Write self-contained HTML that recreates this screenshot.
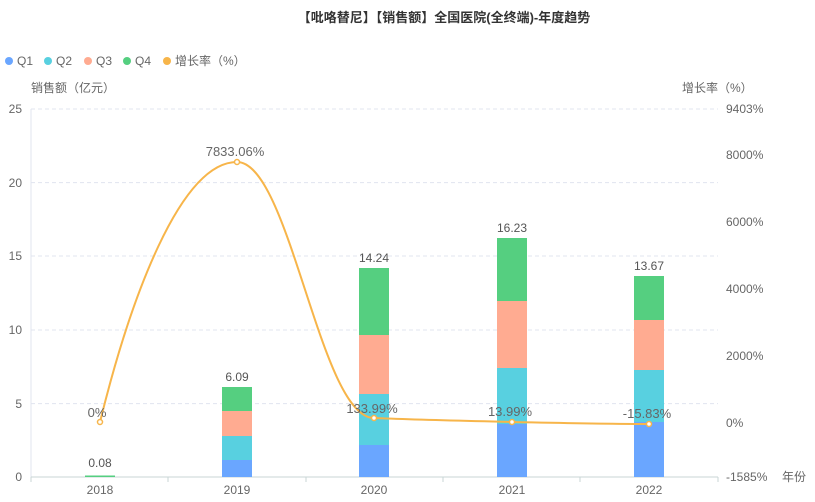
<!DOCTYPE html>
<html><head><meta charset="utf-8"><style>
body{margin:0;background:#fff;width:815px;height:497px;overflow:hidden}
svg text{font-family:"Liberation Sans","Noto Sans CJK SC",sans-serif}
</style></head><body>
<svg width="815" height="497" xmlns="http://www.w3.org/2000/svg">
<text x="444" y="22" font-size="13" font-weight="bold" fill="#333" text-anchor="middle">【吡咯替尼】【销售额】全国医院(全终端)-年度趋势</text>
<g font-size="12" fill="#666">
<circle cx="9" cy="61" r="4" fill="#6aa6ff"/><text x="17" y="65">Q1</text>
<circle cx="48" cy="61" r="4" fill="#58d0e0"/><text x="56" y="65">Q2</text>
<circle cx="88" cy="61" r="4" fill="#ffab91"/><text x="96" y="65">Q3</text>
<circle cx="127" cy="61" r="4" fill="#55cf80"/><text x="135" y="65">Q4</text>
<circle cx="167" cy="61" r="4" fill="#f7b54a"/><text x="175" y="65">增长率（%）</text>
<text x="31" y="92">销售额（亿元）</text>
<text x="682" y="92">增长率（%）</text>
</g>
<g stroke="#e0e4ef" stroke-dasharray="4,3">
<line x1="31" x2="718" y1="109" y2="109"/><line x1="31" x2="718" y1="182.6" y2="182.6"/>
<line x1="31" x2="718" y1="256" y2="256"/><line x1="31" x2="718" y1="330" y2="330"/>
<line x1="31" x2="718" y1="403.6" y2="403.6"/>
</g>
<line x1="31" x2="31" y1="109" y2="477" stroke="#e0e4ef"/>
<line x1="31" x2="718" y1="477" y2="477" stroke="#c9d5d5"/>
<g stroke="#c9d5d5"><line x1="31" x2="31" y1="477" y2="482"/><line x1="168" x2="168" y1="477" y2="482"/><line x1="306" x2="306" y1="477" y2="482"/><line x1="443" x2="443" y1="477" y2="482"/><line x1="580" x2="580" y1="477" y2="482"/><line x1="718" x2="718" y1="477" y2="482"/></g>
<g font-size="12" fill="#666" text-anchor="end">
<text x="22" y="113">25</text><text x="22" y="187">20</text><text x="22" y="260">15</text><text x="22" y="334">10</text><text x="22" y="408">5</text><text x="22" y="481">0</text>
</g>
<g font-size="12" fill="#666">
<text x="726" y="113">9403%</text><text x="726" y="159">8000%</text><text x="726" y="226">6000%</text><text x="726" y="293">4000%</text><text x="726" y="360">2000%</text><text x="726" y="427">0%</text><text x="726" y="481">-1585%</text><text x="782" y="481">年份</text>
</g>
<g font-size="12" fill="#666" text-anchor="middle">
<text x="100" y="494">2018</text><text x="237" y="494">2019</text><text x="374" y="494">2020</text><text x="512" y="494">2021</text><text x="649" y="494">2022</text>
</g>
<rect x="85" y="475.5" width="30" height="1.5" fill="#55cf80"/>
<rect x="222" y="460" width="30" height="17" fill="#6aa6ff"/><rect x="222" y="436" width="30" height="24" fill="#58d0e0"/><rect x="222" y="411" width="30" height="25" fill="#ffab91"/><rect x="222" y="387" width="30" height="24" fill="#55cf80"/>
<rect x="359" y="445" width="30" height="32" fill="#6aa6ff"/><rect x="359" y="394" width="30" height="51" fill="#58d0e0"/><rect x="359" y="335" width="30" height="59" fill="#ffab91"/><rect x="359" y="268" width="30" height="67" fill="#55cf80"/>
<rect x="497" y="424" width="30" height="53" fill="#6aa6ff"/><rect x="497" y="368" width="30" height="56" fill="#58d0e0"/><rect x="497" y="301" width="30" height="67" fill="#ffab91"/><rect x="497" y="238" width="30" height="63" fill="#55cf80"/>
<rect x="634" y="422" width="30" height="55" fill="#6aa6ff"/><rect x="634" y="370" width="30" height="52" fill="#58d0e0"/><rect x="634" y="320" width="30" height="50" fill="#ffab91"/><rect x="634" y="276" width="30" height="44" fill="#55cf80"/>
<g font-size="12" fill="#555" text-anchor="middle">
<text x="100" y="467">0.08</text><text x="237" y="381">6.09</text><text x="374" y="262">14.24</text><text x="512" y="232">16.23</text><text x="649" y="270">13.67</text>
</g>
<path d="M100,422 C130,300 180,162 237,162 C290,162 320,418 374,418 C420,420 470,421 512,422 C560,423 610,424 649,424" fill="none" stroke="#f7b54a" stroke-width="2"/>
<g fill="#fff" stroke="#f7b54a" stroke-width="1.5">
<circle cx="100" cy="422" r="2.5"/><circle cx="237" cy="162" r="2.5"/><circle cx="374" cy="418" r="2.5"/><circle cx="512" cy="422" r="2.5"/><circle cx="649" cy="424" r="2.5"/>
</g>
<g font-size="13" fill="#666" text-anchor="middle">
<text x="97" y="417">0%</text><text x="235" y="156">7833.06%</text><text x="372" y="413">133.99%</text><text x="510" y="416">13.99%</text><text x="647" y="418">-15.83%</text>
</g>
</svg>
</body></html>
